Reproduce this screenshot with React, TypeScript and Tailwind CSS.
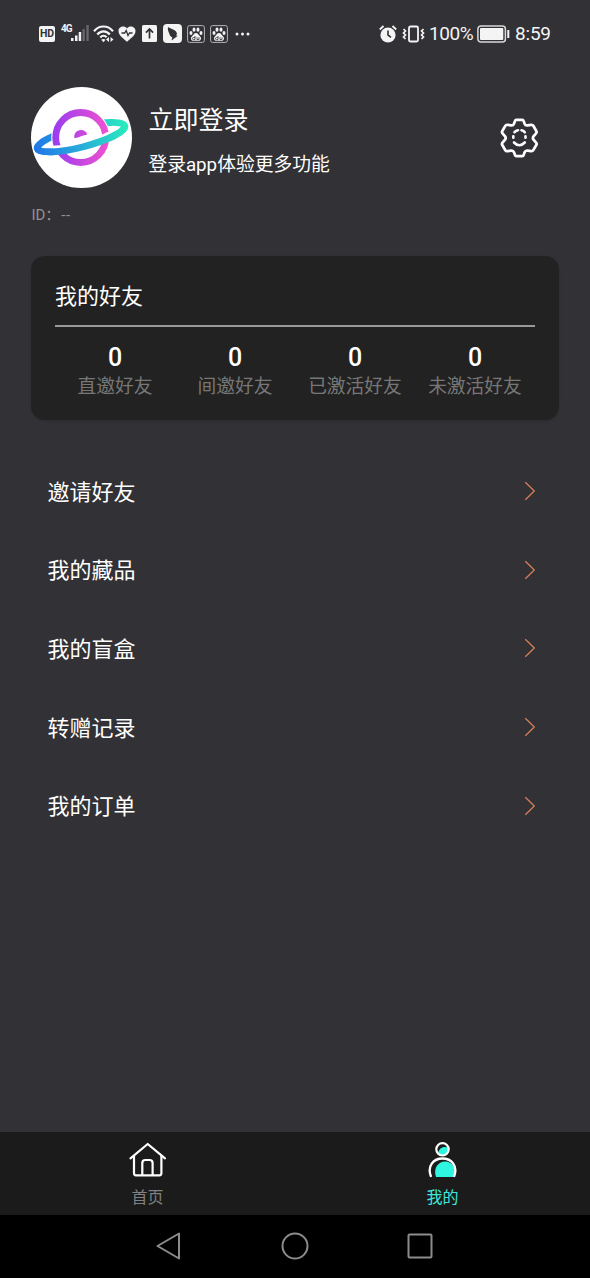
import React, { useState } from 'react';

const friendStats = [
  { label: '直邀好友', value: 0 },
  { label: '间邀好友', value: 0 },
  { label: '已激活好友', value: 0 },
  { label: '未激活好友', value: 0 },
];

const menuItems = ['邀请好友', '我的藏品', '我的盲盒', '转赠记录', '我的订单'];

const PawIcon = () => (
  <svg width="18" height="18" viewBox="0 0 18 18" fill="#f2f2f2">
    <rect x="0.6" y="0.6" width="16.8" height="16.8" rx="2" fill="none" stroke="#b5b5b8" strokeWidth="1" />
    <ellipse cx="4" cy="8" rx="1.5" ry="2" />
    <ellipse cx="7" cy="4.7" rx="1.5" ry="2.1" />
    <ellipse cx="11" cy="4.7" rx="1.5" ry="2.1" />
    <ellipse cx="14" cy="8" rx="1.5" ry="2" />
    <path d="M9 8c-2 0-2.6 2-4 3.2-1.7 1.5-1.2 4.6 1.3 4.6h5.4c2.5 0 3-3.1 1.3-4.6C11.600 10 11 8 9 8z" />
    <path d="M8 11v3.600H6.500a1 1 0 010-2.100H8M10 12.300v2.200h2v-2.200" fill="none" stroke="#323136" strokeWidth="0.8" />
  </svg>
);

const StatusBar = () => (
  <div className="flex h-[67px] items-center pl-[39px] pr-[38px] text-[#f4f4f4]">
    <div className="flex h-4 w-4 items-center justify-center rounded-xs bg-[#f4f4f4] pt-px text-[10.5px] font-bold leading-none text-[#323136]">
      HD
    </div>
    <span className="mb-[9px] ml-[6px] w-[9px] text-[10px] font-bold leading-none tracking-[-1px]">4G</span>
    <svg className="ml-px" width="18" height="17" viewBox="0 0 18 17">
      <rect x="0" y="13" width="2.500" height="3" fill="#f4f4f4" />
      <rect x="4" y="10.500" width="2.500" height="5.500" fill="#f4f4f4" />
      <rect x="7.700" y="7" width="2.500" height="9" fill="#f4f4f4" />
      <rect x="11.500" y="4" width="2.300" height="12" fill="#69686c" />
      <rect x="15.400" y="0" width="2.300" height="16" fill="#69686c" />
    </svg>
    <svg className="ml-[4px]" width="22" height="18" viewBox="0 0 22 18" fill="none" stroke="#f4f4f4" strokeWidth="2.200">
      <path d="M1 6.300C6-.1 15-.1 20 6.300" />
      <path d="M4.300 9.500c3.500-4.300 9-4.300 12.500 0" />
      <path d="M7.300 12.500c2-2.300 4.500-2.300 6.300-.3" />
      <path d="M10.500 17.300l-2.300-2.500a3.300 3.300 0 014.300 0z" fill="#f4f4f4" stroke="none" />
      <path d="M16 12v5l-3-2.500zM17.500 12v5l3-2.500z" fill="#f4f4f4" stroke="none" />
    </svg>
    <svg className="ml-[3px] mt-px" width="18" height="16" viewBox="0 0 18 16">
      <path d="M9 15.700C6 13 .5 9.500.5 5 .5.500 6.500-1 9 2.500 11.500-1 17.500.5 17.500 5c0 4.500-5.500 8-8.500 10.700z" fill="#f4f4f4" />
      <path d="M3.500 7h3.200l1.500-2.500 1.800 5 1.500-2.500h3" fill="none" stroke="#323136" strokeWidth="1.300" />
    </svg>
    <svg className="ml-[6px]" width="15" height="17" viewBox="0 0 15 17">
      <rect width="15" height="17" rx="1.500" fill="#f4f4f4" />
      <path d="M7.500 13.500V4M3.900 7.600l3.600-3.600 3.600 3.600" fill="none" stroke="#323136" strokeWidth="1.700" />
    </svg>
    <svg className="ml-[6px]" width="19" height="19" viewBox="0 0 19 19">
      <rect width="19" height="19" rx="4" fill="#f4f4f4" />
      <path d="M5 3c3 2 8 2.500 9 6.500l-.8 2.200h1.700L8.500 16.500l.8-3.200C7.500 12.500 6.500 11.500 6.300 9.500 5.300 7.500 4.500 5.500 5 3z" fill="#323136" />
    </svg>
    <div className="ml-[5px] flex gap-[5px]">
      <PawIcon />
      <PawIcon />
    </div>
    <svg className="ml-[7px]" width="15" height="4" viewBox="0 0 15 4" fill="#f4f4f4">
      <circle cx="2" cy="2" r="1.500" />
      <circle cx="7.500" cy="2" r="1.500" />
      <circle cx="13" cy="2" r="1.500" />
    </svg>

    <div className="ml-auto flex items-center">
      <svg width="18" height="18" viewBox="0 0 18 18">
        <circle cx="9" cy="10" r="7.600" fill="#f4f4f4" />
        <path d="M.8 4.500L4.500 1M17.200 4.500L13.500 1" stroke="#f4f4f4" strokeWidth="1.800" />
        <path d="M9 5.500V10l3 2.300" fill="none" stroke="#323136" strokeWidth="1.600" />
      </svg>
      <svg className="ml-[5px]" width="23" height="18" viewBox="0 0 22 18" fill="none" stroke="#f4f4f4">
        <rect x="6.500" y="1.500" width="9" height="15" rx="1.500" strokeWidth="1.800" />
        <path d="M1 4l2 2-2 2 2 2-2 2 2 2M21 4l-2 2 2 2-2 2 2 2-2 2" strokeWidth="1.700" />
      </svg>
      <span className="ml-[4px] w-[45px] text-[19px] leading-6 tracking-[-0.4px]">100%</span>
      <svg className="ml-[3px]" width="33" height="18" viewBox="0 0 33 18" fill="#f4f4f4">
        <rect x="0.900" y="0.900" width="27.500" height="16.200" rx="3" fill="none" stroke="#d9d9da" strokeWidth="1.500" />
        <rect x="3" y="3" width="23.300" height="12" rx="1" />
        <rect x="30.300" y="5" width="2" height="8" rx="0.500" />
      </svg>
      <span className="ml-[5px] w-[37px] text-[19px] leading-6 tracking-[-0.2px]">8:59</span>
    </div>
  </div>
);

const PlanetLogo = () => (
  <svg width="101" height="101" viewBox="0 0 101 101" fill="none">
    <defs>
      <linearGradient id="planet" x1="22" y1="50" x2="78" y2="50" gradientUnits="userSpaceOnUse">
        <stop offset="0" stopColor="#9a3df0" />
        <stop offset="1" stopColor="#f052d0" />
      </linearGradient>
      <linearGradient id="orbit" x1="-47" y1="0" x2="47" y2="0" gradientUnits="userSpaceOnUse">
        <stop offset="0" stopColor="#2078e8" />
        <stop offset="0.500" stopColor="#2aaed8" />
        <stop offset="1" stopColor="#28ecbd" />
      </linearGradient>
    </defs>
    <circle cx="50.500" cy="50.500" r="50.500" fill="#fff" />
    <g transform="translate(50 50.200) rotate(-14.500)">
      <ellipse rx="45.200" ry="9.800" stroke="url(#orbit)" strokeWidth="6.800" />
    </g>
    <circle cx="49.700" cy="50.500" r="25" fill="#fff" stroke="#fff" strokeWidth="9" />
    <circle cx="49.700" cy="50.500" r="25" stroke="url(#planet)" strokeWidth="6.800" />
    <path d="M43.500 51.200c-1-4.500 2-8.200 6.300-8.200 3.700 0 6 2.200 6.400 4.500C52.500 48 48 50.500 43.500 51.200z" fill="url(#planet)" />
    <g transform="translate(50 50.200) rotate(-14.500)">
      {/* breaks the planet's outline just above the front half of the orbit */}
      <path d="M-30 4.500L-20 6.200M20 6.200L30 4.500" stroke="#fff" strokeWidth="6.500" />
      <path d="M-45.200 0A45.200 9.800 0 0 0 45.200 0" stroke="url(#orbit)" strokeWidth="6.800" />
    </g>
  </svg>
);

const SettingsIcon = () => (
  <svg width="40" height="42" viewBox="0 0 40 42" fill="none" stroke="#fff" strokeLinecap="round" strokeLinejoin="round">
    <path
      d="M16.300 2.900h6q1 0 1.300 1l1 2.800q.8 2 3 1.700l3.500-.6q1.500-.2 2.200 1l3 5.200q.8 1.200-.2 2.300l-2.600 3q-1.200 1.700 0 3.400l2.600 3q1 1.100.2 2.300l-3 5.200q-.7 1.200-2.200 1l-3.500-.6q-2.200-.3-3 1.700l-1 2.800q-.3 1-1.300 1h-6q-1 0-1.300-1l-1-2.800q-.8-2-3-1.700l-3.500.6q-1.500.2-2.200-1l-3-5.200q-.8-1.200.2-2.300l2.600-3q1.200-1.700 0-3.400l-2.600-3q-1-1.100-.2-2.300l3-5.200q.7-1.200 2.200-1l3.500.6q2.200.3 3-1.700l1-2.800q.3-1 1.300-1z"
      strokeWidth="2.700"
    />
    <path d="M14.500 15.200q1.500-1.700 3.500-2M21.500 13.300q2 .3 3.300 2M13.300 19.300v1.400M25.500 19.300v1.400M14 25.500q5.300 5.500 10.800 0" strokeWidth="2.600" />
  </svg>
);

const ChevronIcon = () => (
  <svg width="12" height="20" viewBox="0 0 12 20" fill="none">
    <path d="M1.300 1.200l9 8.800-9 8.800" stroke="#dc8358" strokeWidth="1.200" />
  </svg>
);

const HomeIcon = () => (
  <svg width="38" height="36" viewBox="0 0 38 36" fill="none" stroke="#fff" strokeWidth="2.200" strokeLinecap="round" strokeLinejoin="round">
    <path d="M1.500 16.300L18.700 2l17.300 14.300" />
    <path d="M5 14v17.300q0 2 2 2h23.400q2 0 2-2V14" />
    <path d="M13.300 33V21q0-3 3-3h4.300q3 0 3 3v12" />
  </svg>
);

const UserIcon = () => (
  <svg width="30" height="36" viewBox="0 0 30 36" fill="none">
    <path d="M10 12.500a7 7 0 0110-6.800A6 6 0 0115 13.500z" fill="#2ff5e0" />
    <path d="M8 35c-3-8.500 2-15.500 9-15.500 7.500 0 12 7.500 9 15.500z" fill="#2ff5e0" />
    <circle cx="14.500" cy="7.300" r="6.200" stroke="#fff" strokeWidth="2.200" />
    <path d="M2.800 34C-1 24 5.500 16.500 14.500 16.500S30 24 26.300 34" stroke="#fff" strokeWidth="2.300" strokeLinecap="round" />
  </svg>
);

const tabs = [
  { name: '首页', icon: HomeIcon },
  { name: '我的', icon: UserIcon },
];

const App = () => {
  const [activeTab, setActiveTab] = useState('我的');

  return (
    <div className="flex h-[1278px] w-[590px] flex-col overflow-hidden bg-[#323136] font-['Roboto','Noto_Sans_CJK_SC',sans-serif] text-white">
      <StatusBar />

      <main className="flex-1 px-[31.4px]">
        <header className="flex items-center pt-5">
          <PlanetLogo />
          <div className="ml-4 flex flex-col gap-3 pt-[6px]">
            <h1 className="text-[25px] leading-[36px]">立即登录</h1>
            <p className="text-[18.75px] leading-[28px]">登录app体验更多功能</p>
          </div>
          <button className="ml-auto mr-[18.5px]">
            <SettingsIcon />
          </button>
        </header>
        <p className="mt-4 text-[15px] leading-[22px] text-[#929195]">
          ID：<span className="ml-px tracking-[0.6px]">--</span>
        </p>

        <section className="mt-[30px] h-[164px] rounded-[14px] bg-[#222222] px-[23.6px] pt-[24px] shadow-sm">
          <h2 className="h-[45px] text-[22px] leading-[34px]">我的好友</h2>
          <div className="h-[2px] bg-[#999999]"></div>
          <div className="grid grid-cols-4 pt-[17px]">
            {friendStats.map((stat) => (
              <div key={stat.label} className="flex flex-col items-center">
                <span className="text-[25px] font-medium leading-[28px]">{stat.value}</span>
                <span className="whitespace-nowrap pt-px text-[18.75px] leading-[28px] text-[#777777]">{stat.label}</span>
              </div>
            ))}
          </div>
        </section>

        <ul className="mt-8">
          {menuItems.map((item) => (
            <li key={item} className="flex h-[78.6px] items-center justify-between pl-4 pr-[23px]">
              <span className="pt-[3px] text-[22px] leading-8">{item}</span>
              <ChevronIcon />
            </li>
          ))}
        </ul>
      </main>

      <nav className="grid h-[83px] grid-cols-2 bg-[#1b1b1b]">
        {tabs.map(({ name, icon: Icon }) => (
          <button key={name} onClick={() => setActiveTab(name)} className="flex flex-col items-center pt-[10px]">
            <Icon />
            <span className={`mt-[7px] text-[16px] leading-[25px] ${activeTab === name ? 'text-[#3de8da]' : 'text-[#828282]'}`}>
              {name}
            </span>
          </button>
        ))}
      </nav>

      <div className="flex h-[63px] items-center justify-between bg-black pb-px pl-[155px] pr-[157px]">
        <svg width="27" height="28" viewBox="0 0 27 28" fill="none" stroke="#8c8c8c" strokeWidth="2" strokeLinejoin="round">
          <path d="M24 1.500v25L2.500 14z" />
        </svg>
        <svg width="28" height="28" viewBox="0 0 28 28" fill="none" stroke="#8c8c8c" strokeWidth="2">
          <circle cx="14" cy="14" r="12.500" />
        </svg>
        <svg width="26" height="26" viewBox="0 0 26 26" fill="none" stroke="#8c8c8c" strokeWidth="2">
          <rect x="1.500" y="1.500" width="23" height="23" rx="1" />
        </svg>
      </div>
    </div>
  );
};

export default App;
